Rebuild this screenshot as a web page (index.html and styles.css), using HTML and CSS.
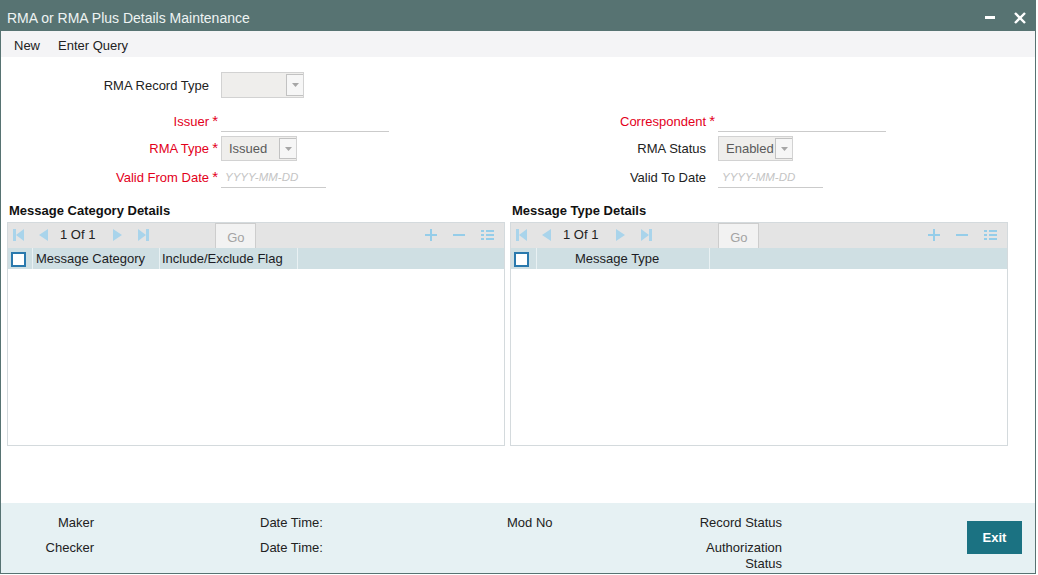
FILE: index.html
```html
<!DOCTYPE html>
<html lang="en">
<head>
<meta charset="utf-8">
<title>RMA or RMA Plus Details Maintenance</title>
<link rel="stylesheet" href="styles.css">
</head>
<body>
<div class="window">
  <div class="titlebar">
    <span class="title">RMA or RMA Plus Details Maintenance</span>
    <div class="wincontrols">
      <svg class="ic-min" width="10" height="3" viewBox="0 0 10 3"><rect width="10" height="3" fill="#ffffff"/></svg>
      <svg class="ic-close" width="12" height="12" viewBox="0 0 12 12"><path d="M1 1L11 11M11 1L1 11" stroke="#ffffff" stroke-width="2.4"/></svg>
    </div>
  </div>
  <div class="menubar">
    <span class="menu-item">New</span>
    <span class="menu-item">Enter Query</span>
  </div>
  <div class="content">
    <div class="form">
      <div class="row row-1">
        <label class="lbl">RMA Record Type<span class="req"></span></label>
        <div class="field">
          <div class="sel sel-record">
            <span class="val"></span>
            <span class="arr"><svg width="7" height="4" viewBox="0 0 7 4"><path d="M0 0h7L3.5 4z" fill="#a6a6a6"/></svg></span>
          </div>
        </div>
      </div>
      <div class="row row-2">
        <label class="lbl red">Issuer<span class="req">*</span></label>
        <div class="field"><div class="txt txt-long"></div></div>
        <label class="lbl red">Correspondent<span class="req">*</span></label>
        <div class="field"><div class="txt txt-long"></div></div>
      </div>
      <div class="row row-3">
        <label class="lbl red">RMA Type<span class="req">*</span></label>
        <div class="field">
          <div class="sel sel-type">
            <span class="val">Issued</span>
            <span class="arr"><svg width="7" height="4" viewBox="0 0 7 4"><path d="M0 0h7L3.5 4z" fill="#a6a6a6"/></svg></span>
          </div>
        </div>
        <label class="lbl">RMA Status<span class="req"></span></label>
        <div class="field">
          <div class="sel sel-status">
            <span class="val">Enabled</span>
            <span class="arr"><svg width="7" height="4" viewBox="0 0 7 4"><path d="M0 0h7L3.5 4z" fill="#a6a6a6"/></svg></span>
          </div>
        </div>
      </div>
      <div class="row row-4">
        <label class="lbl red">Valid From Date<span class="req">*</span></label>
        <div class="field"><div class="txt txt-date"><span class="ph">YYYY-MM-DD</span></div></div>
        <label class="lbl">Valid To Date<span class="req"></span></label>
        <div class="field"><div class="txt txt-date"><span class="ph">YYYY-MM-DD</span></div></div>
      </div>
    </div>

    <div class="grids">
      <section class="section">
        <h2 class="sec-title">Message Category Details</h2>
        <div class="gridbox">
          <div class="toolbar">
            <svg class="pg pg-first" width="11" height="12" viewBox="0 0 11 12"><rect x="0" y="0" width="3" height="12"/><path d="M11 0L3 6L11 12Z"/></svg>
            <svg class="pg pg-prev" width="10" height="12" viewBox="0 0 10 12"><path d="M10 0L1 6L10 12Z"/></svg>
            <span class="pg-text">1 Of 1</span>
            <svg class="pg pg-next" width="10" height="12" viewBox="0 0 10 12"><path d="M0 0L9 6L0 12Z"/></svg>
            <svg class="pg pg-last" width="11" height="12" viewBox="0 0 11 12"><path d="M0 0L8 6L0 12Z"/><rect x="8" y="0" width="3" height="12"/></svg>
            <span class="go">Go</span>
            <span class="spacer"></span>
            <svg class="act act-add" width="12" height="12" viewBox="0 0 12 12"><path d="M6 0v12M0 6h12"/></svg>
            <svg class="act act-del" width="12" height="12" viewBox="0 0 12 12"><path d="M0 6h12"/></svg>
            <svg class="act act-list" width="13" height="12" viewBox="0 0 13 12"><rect x="0" y="1" width="3" height="2"/><rect x="5" y="1" width="8" height="2"/><rect x="0" y="5" width="3" height="2"/><rect x="5" y="5" width="8" height="2"/><rect x="0" y="9" width="3" height="2"/><rect x="5" y="9" width="8" height="2"/></svg>
          </div>
          <div class="ghead">
            <div class="gcell gcell-chk"><span class="chk"></span></div>
            <div class="gcell gcell-cat">Message Category</div>
            <div class="gcell gcell-flag">Include/Exclude Flag</div>
            <div class="gcell gcell-rest"></div>
          </div>
        </div>
      </section>

      <section class="section">
        <h2 class="sec-title">Message Type Details</h2>
        <div class="gridbox">
          <div class="toolbar">
            <svg class="pg pg-first" width="11" height="12" viewBox="0 0 11 12"><rect x="0" y="0" width="3" height="12"/><path d="M11 0L3 6L11 12Z"/></svg>
            <svg class="pg pg-prev" width="10" height="12" viewBox="0 0 10 12"><path d="M10 0L1 6L10 12Z"/></svg>
            <span class="pg-text">1 Of 1</span>
            <svg class="pg pg-next" width="10" height="12" viewBox="0 0 10 12"><path d="M0 0L9 6L0 12Z"/></svg>
            <svg class="pg pg-last" width="11" height="12" viewBox="0 0 11 12"><path d="M0 0L8 6L0 12Z"/><rect x="8" y="0" width="3" height="12"/></svg>
            <span class="go">Go</span>
            <span class="spacer"></span>
            <svg class="act act-add" width="12" height="12" viewBox="0 0 12 12"><path d="M6 0v12M0 6h12"/></svg>
            <svg class="act act-del" width="12" height="12" viewBox="0 0 12 12"><path d="M0 6h12"/></svg>
            <svg class="act act-list" width="13" height="12" viewBox="0 0 13 12"><rect x="0" y="1" width="3" height="2"/><rect x="5" y="1" width="8" height="2"/><rect x="0" y="5" width="3" height="2"/><rect x="5" y="5" width="8" height="2"/><rect x="0" y="9" width="3" height="2"/><rect x="5" y="9" width="8" height="2"/></svg>
          </div>
          <div class="ghead">
            <div class="gcell gcell-chk2"><span class="chk"></span></div>
            <div class="gcell gcell-type">Message Type</div>
            <div class="gcell gcell-rest"></div>
          </div>
        </div>
      </section>
    </div>
  </div>

  <div class="footer">
    <span class="f-maker">Maker</span>
    <span class="f-dt1">Date Time:</span>
    <span class="f-mod">Mod No</span>
    <span class="f-rec">Record Status</span>
    <span class="f-checker">Checker</span>
    <span class="f-dt2">Date Time:</span>
    <span class="f-auth"><span class="wrap">Authorization Status</span></span>
    <button class="exit" type="button">Exit</button>
  </div>
</div>
</body>
</html>
```

FILE: styles.css
```css
* { box-sizing: border-box; }

html, body {
  margin: 0;
  padding: 0;
  background: #ffffff;
}

body {
  font-family: "Liberation Sans", Arial, sans-serif;
  font-size: 13px;
  color: #222222;
}

.window {
  width: 1036px;
  height: 574px;
  border: 1px solid #577372;
  display: flex;
  flex-direction: column;
  background: #ffffff;
  overflow: hidden;
}

/* Title bar */
.titlebar {
  height: 30px;
  flex: none;
  background: #577372;
  color: #eef3f3;
  display: flex;
  align-items: center;
  justify-content: space-between;
  padding-left: 6px;
}

.title {
  font-size: 14px;
  padding-top: 3px;
}

.wincontrols {
  display: flex;
  align-items: center;
  gap: 19px;
  padding-right: 9px;
  padding-top: 3px;
}

.ic-min, .ic-close { display: block; }

/* Menu bar */
.menubar {
  height: 26px;
  flex: none;
  background: #f4f4f6;
  display: flex;
  align-items: center;
  gap: 18px;
  padding-left: 13px;
  padding-top: 2px;
}

.content {
  flex: 1;
}

/* Form */
.form {
  padding-top: 15px;
}

.row {
  display: grid;
  grid-template-columns: 218px 281px 216px auto;
  align-items: center;
}

.row-1 { height: 26px; }
.row-2 { height: 22px; margin-top: 12px; }
.row-3 { height: 25px; margin-top: 4px; }
.row-4 { height: 22px; margin-top: 5px; }

.lbl {
  display: flex;
  justify-content: flex-end;
  align-items: center;
  white-space: nowrap;
  color: #222222;
}

.lbl.red { color: #e3001b; }

.req {
  width: 10px;
  text-align: right;
  font-size: 15px;
  line-height: 13px;
  padding-right: 1px;
  align-self: flex-start;
}

.field {
  margin-left: 2px;
  display: flex;
  align-items: center;
  height: 100%;
}

.txt {
  height: 22px;
  border-bottom: 1px solid #cbcbcb;
  display: flex;
  align-items: center;
}

.txt-long { width: 168px; }
.txt-date { width: 105px; }

.ph {
  padding-left: 4px;
  font-size: 11.5px;
  font-style: italic;
  color: #c4c4c4;
}

.sel {
  display: flex;
  border: 1px solid #d2d2d2;
  background: #efeeec;
}

.sel-record { width: 83px; height: 26px; }
.sel-type { width: 76px; height: 25px; }
.sel-status { width: 75px; height: 25px; }

.sel .val {
  flex: 1;
  padding-left: 7px;
  color: #5a5a5a;
  display: flex;
  align-items: center;
}

.sel .arr {
  width: 17px;
  margin: 1px 0;
  border: 1px solid #c2c2c2;
  border-right: none;
  background: #f6f6f6;
  display: flex;
  align-items: center;
  justify-content: center;
}

.sel .arr svg { display: block; }

/* Grids */
.grids {
  display: flex;
  gap: 5px;
  padding-left: 6px;
  margin-top: 15px;
}

.section {
  width: 498px;
}

.sec-title {
  margin: 0 0 4px 0;
  padding-left: 2px;
  font-size: 13px;
  font-weight: bold;
  line-height: 15px;
  color: #111111;
}

.gridbox {
  height: 224px;
  border: 1px solid #d4dadd;
}

.toolbar {
  height: 25px;
  background: #e4e4e4;
  display: flex;
  align-items: center;
  padding-left: 5px;
  padding-right: 10px;
  padding-bottom: 2px;
}

.pg { display: block; fill: #a9d4eb; }
.pg-prev { margin-left: 14px; }
.pg-text { margin-left: 12px; color: #222222; }
.pg-next { margin-left: 18px; }
.pg-last { margin-left: 15px; }

.go {
  margin-left: 66px;
  width: 41px;
  height: 25px;
  align-self: flex-end;
  margin-bottom: -2px;
  background: #f2f2f2;
  border: 1px solid #cdcdcd;
  border-bottom: none;
  color: #a3a3a3;
  display: flex;
  align-items: center;
  justify-content: center;
  padding-top: 2px;
}

.spacer { flex: 1; }

.act { display: block; stroke: #95cde9; stroke-width: 2; fill: #95cde9; }
.act-del { margin-left: 16px; }
.act-list { margin-left: 16px; stroke: none; }

.ghead {
  height: 21px;
  background: #cfdfe3;
  display: flex;
}

.gcell {
  height: 21px;
  display: flex;
  align-items: center;
  border-right: 1px solid #e9f1f3;
  color: #1c1c24;
  white-space: nowrap;
}

.gcell-chk { width: 25px; padding-left: 3px; }
.gcell-cat { width: 127px; padding-left: 3px; }
.gcell-flag { width: 138px; padding-left: 2px; }
.gcell-chk2 { width: 26px; padding-left: 3px; }
.gcell-type { width: 173px; padding-left: 38px; }
.gcell-rest { flex: 1; border-right: none; }

.chk {
  width: 15px;
  height: 15px;
  background: #ffffff;
  border: 2px solid #2a79ad;
  margin-top: 1px;
}

/* Footer */
.footer {
  height: 70px;
  flex: none;
  background: #e6f1f3;
  display: grid;
  grid-template-columns: 93px 166px 247px 80px 195px auto;
  grid-template-rows: 16px auto;
  row-gap: 9px;
  padding-top: 12px;
  line-height: 16px;
  color: #222222;
}

.f-maker { grid-column: 1; grid-row: 1; text-align: right; }
.f-dt1 { grid-column: 3; grid-row: 1; }
.f-mod { grid-column: 4; grid-row: 1; }
.f-rec { grid-column: 5; grid-row: 1; text-align: right; }
.f-checker { grid-column: 1; grid-row: 2; text-align: right; }
.f-dt2 { grid-column: 3; grid-row: 2; }
.f-auth { grid-column: 5; grid-row: 2; text-align: right; }
.f-auth .wrap { display: inline-block; width: 78px; text-align: right; }

.exit {
  grid-column: 6;
  grid-row: 1 / 3;
  align-self: start;
  margin-left: 185px;
  margin-top: 6px;
  width: 55px;
  height: 33px;
  background: #1b7282;
  color: #ffffff;
  border: none;
  font-family: "Liberation Sans", Arial, sans-serif;
  font-size: 13px;
  font-weight: bold;
  padding: 0;
}
```
